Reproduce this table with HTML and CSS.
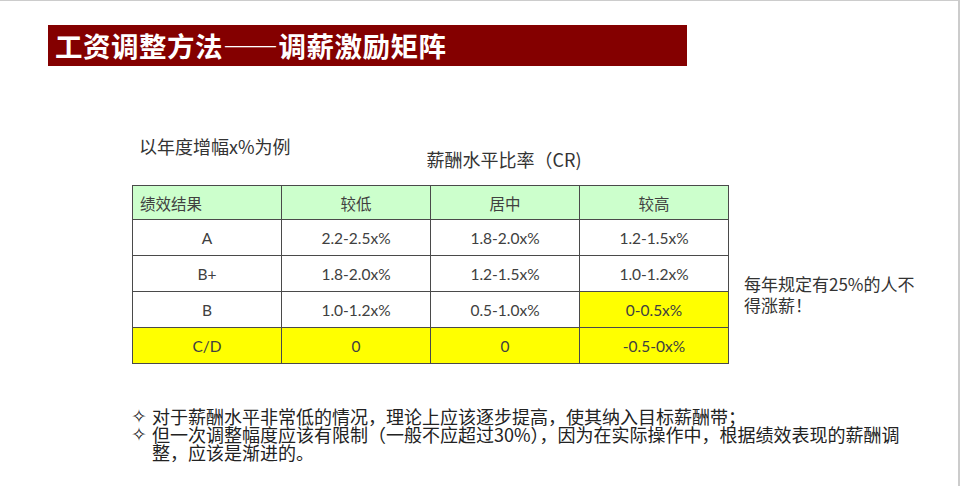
FILE: index.html
```html
<!DOCTYPE html>
<html lang="zh-CN">
<head>
<meta charset="utf-8">
<title>工资调整方法——调薪激励矩阵</title>
<link rel="stylesheet" href="styles.css">
</head>
<body>
<div class="slide">
  <div class="title-bar">工资调整方法——调薪激励矩阵</div>

  <div class="captions">
    <div class="example">以年度增幅x%为例</div>
    <div class="cr-label">薪酬水平比率（CR)</div>
  </div>

  <div class="matrix-row">
    <table class="matrix">
      <tr class="head">
        <td class="first">绩效结果</td>
        <td>较低</td>
        <td>居中</td>
        <td>较高</td>
      </tr>
      <tr>
        <td>A</td>
        <td>2.2-2.5x%</td>
        <td>1.8-2.0x%</td>
        <td>1.2-1.5x%</td>
      </tr>
      <tr>
        <td>B+</td>
        <td>1.8-2.0x%</td>
        <td>1.2-1.5x%</td>
        <td>1.0-1.2x%</td>
      </tr>
      <tr>
        <td>B</td>
        <td>1.0-1.2x%</td>
        <td>0.5-1.0x%</td>
        <td class="hl">0-0.5x%</td>
      </tr>
      <tr class="hl-row">
        <td>C/D</td>
        <td>0</td>
        <td>0</td>
        <td>-0.5-0x%</td>
      </tr>
    </table>
    <div class="note">每年规定有25%的人不<br>得涨薪！</div>
  </div>

  <ul class="points">
    <li>对于薪酬水平非常低的情况，理论上应该逐步提高，使其纳入目标薪酬带；</li>
    <li>但一次调整幅度应该有限制（一般不应超过30%），因为在实际操作中，根据绩效表现的薪酬调<br>整，应该是渐进的。</li>
  </ul>
</div>
</body>
</html>
```

FILE: styles.css
```css
* { box-sizing: border-box; }
html, body {
  margin: 0;
  padding: 0;
  background: #ffffff;
}
body {
  font-family: "Noto Sans CJK SC", "Noto Sans", sans-serif;
  color: #333333;
}
.slide {
  width: 960px;
  height: 486px;
  border-top: 1px solid #cccccc;
  border-right: 2px solid #cccccc;
  overflow: hidden;
}
.title-bar {
  margin: 24px 0 0 48px;
  width: 639px;
  height: 41px;
  background: #840000;
  color: #ffffff;
  font-size: 27.5px;
  font-weight: 700;
  line-height: 41px;
  padding-left: 7px;
  letter-spacing: 0.5px;
  white-space: nowrap;
}
.captions {
  display: grid;
  grid-template-columns: 149px 446px;
  margin: 69px 0 0 132px;
  height: 50px;
}
.example {
  font-size: 18px;
  line-height: 22px;
  padding-left: 7px;
  color: #333333;
  white-space: nowrap;
}
.cr-label {
  font-size: 18px;
  line-height: 22px;
  padding-top: 13px;
  text-align: center;
  color: #333333;
  white-space: nowrap;
}
.matrix-row {
  display: flex;
  align-items: flex-start;
  margin-left: 132px;
}
.matrix {
  border-collapse: collapse;
  table-layout: fixed;
  width: 596px;
  font-family: "Lato", "Noto Sans CJK SC", sans-serif;
  font-size: 15.5px;
  color: #404040;
}
.matrix td {
  border: 1px solid #4a4a4a;
  width: 149px;
  height: 36px;
  text-align: center;
  padding: 0;
}
.matrix .head td {
  background: #ccffcc;
  height: 34px;
  font-family: "Noto Sans CJK SC", sans-serif;
}
.matrix .head td.first {
  text-align: left;
  padding-left: 7px;
}
.matrix td.hl,
.matrix .hl-row td {
  background: #ffff00;
}
.note {
  margin: 88px 0 0 15px;
  font-size: 17px;
  line-height: 21px;
  color: #333333;
  white-space: nowrap;
}
.points {
  list-style: none;
  margin: 43px 0 0 132px;
  padding: 0;
  font-size: 18px;
  line-height: 18px;
  color: #222222;
}
.points li {
  position: relative;
  padding-left: 20px;
  white-space: nowrap;
}
.points li::before {
  content: "\2727";
  position: absolute;
  left: -1px;
  top: 0;
  font-family: "DejaVu Sans", sans-serif;
  font-size: 19px;
  line-height: 18px;
}
```
